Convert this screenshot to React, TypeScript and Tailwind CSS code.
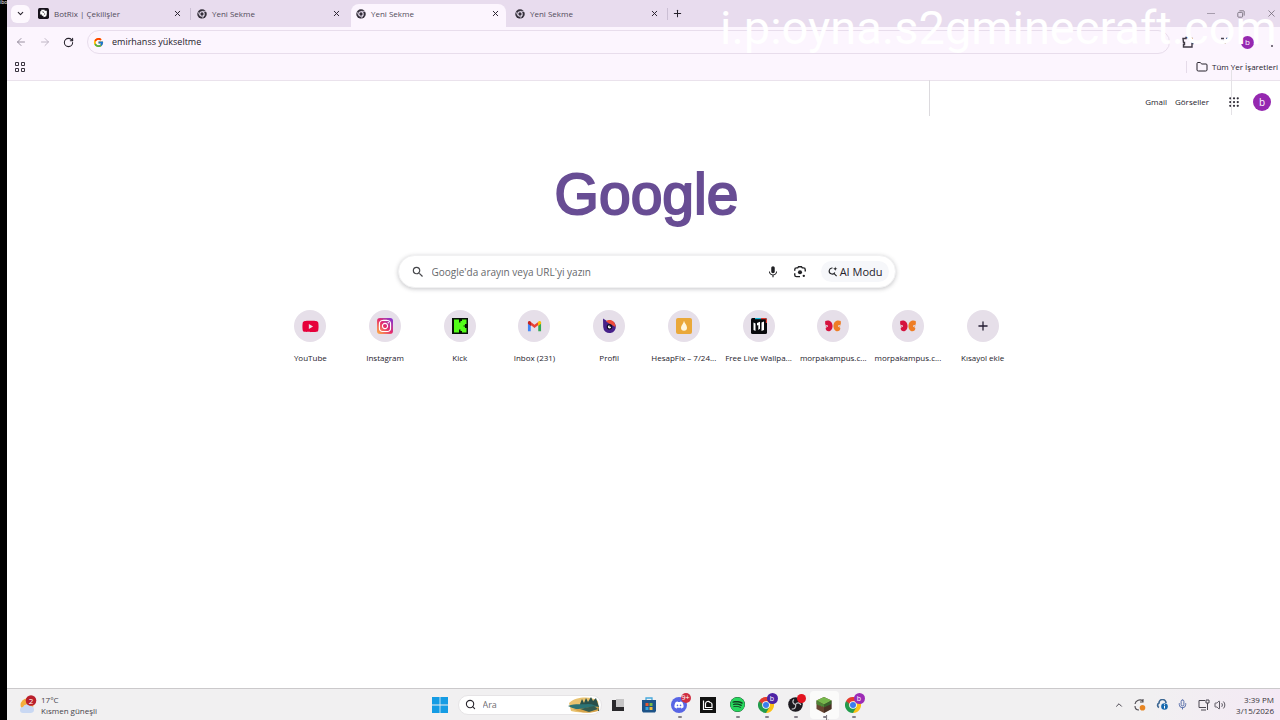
import React from "react";
import { ArrowLeft, ArrowRight, ChevronDown, ChevronUp, Folder, Mic, Plus, RotateCw, Search, Volume2, X } from "lucide-react";
import { FcGoogle } from "react-icons/fc";
import { FaDiscord, FaInstagram, FaSpotify, FaYoutube } from "react-icons/fa";
import { MdMic, MdSearch } from "react-icons/md";

function MonoChrome() {
  return (
    <svg viewBox="0 0 20 20" className="size-[10px] shrink-0" aria-hidden="true">
      <circle cx="10" cy="10" r="9.5" fill="#35303b" />
      <circle cx="10" cy="10" r="5.4" fill="#e9dff0" />
      <circle cx="10" cy="10" r="3.3" fill="#35303b" />
      <path d="M10 4.8H19M5.5 12.5 1.5 5.5M14.5 12.5 10 19.5" stroke="#e9dff0" strokeWidth="1.4" />
    </svg>
  );
}

function BotRix() {
  return (
    <svg viewBox="0 0 20 20" className="size-[11px] shrink-0" aria-hidden="true">
      <rect width="20" height="20" rx="3" fill="#16121b" />
      <path d="M6 3h6v2h4v6l-1 4-5 2v-3H7v-2H4V6h2z" fill="#fff" />
      <path d="m8 7 3 1M12 10v2" stroke="#16121b" strokeWidth="1.5" fill="none" />
    </svg>
  );
}

function ColorChrome() {
  return (
    <svg viewBox="0 0 48 48" className="size-4" aria-hidden="true">
      <path d="M24 24 3.2 12A24 24 0 0 1 44.8 12z" fill="#e33b2e" />
      <path d="M24 24 44.8 12A24 24 0 0 1 24 48z" fill="#fbc116" />
      <path d="M24 24V48A24 24 0 0 1 3.2 12z" fill="#229c4c" />
      <path d="M24 12h20.8L34.4 30z" fill="#fbc116" />
      <path d="M34.4 30 24 48 13.6 30z" fill="#229c4c" />
      <path d="M13.6 30 3.2 12 24 12z" fill="#e33b2e" />
      <path d="M3.2 12 13.6 30 24 30z" fill="#229c4c" />
      <circle cx="24" cy="24" r="11.5" fill="#fff" />
      <circle cx="24" cy="24" r="9" fill="#3b7ded" />
    </svg>
  );
}

function Lens() {
  return (
    <svg viewBox="0 0 24 24" className="size-[14px]" fill="none" stroke="#202124" strokeWidth="2.4" aria-hidden="true">
      <path d="M3 10V8a3 3 0 0 1 3-3h2l1.5-2h5L16 5h2a3 3 0 0 1 3 3v3M3 14v3a3 3 0 0 0 3 3h6" />
      <circle cx="12" cy="12.5" r="3.5" fill="#202124" stroke="none" />
      <circle cx="18.5" cy="18.5" r="2" fill="#202124" stroke="none" />
    </svg>
  );
}

function AiSearch() {
  return (
    <svg viewBox="0 0 24 24" className="size-[11px] shrink-0" fill="none" stroke="#202124" strokeWidth="2.4" aria-hidden="true">
      <path d="M12 4.5a6.500 6.500 0 1 0 5 9.500M14.500 15.500 21 22" />
      <path d="M18 1c.6 3.500 1.500 4.400 5 5-3.500.6-4.400 1.500-5 5-.6-3.500-1.500-4.400-5-5 3.500-.6 4.400-1.500 5-5z" fill="#202124" stroke="none" />
    </svg>
  );
}

function Extensions() {
  return (
    <svg viewBox="0 0 12 12" className="size-3" fill="none" stroke="#3f3944" strokeWidth="1.4" aria-hidden="true">
      <path d="M1 2.500h3V1.500h3v1h3v3h1v2h-1V11H1.500V8.500h1v-2h-1z" />
    </svg>
  );
}

function AppGrid() {
  const cells = [3, 8, 13];
  return (
    <svg viewBox="0 0 16 16" className="size-3" fill="#33303a" aria-hidden="true">
      {cells.flatMap((x) => cells.map((y) => <circle key={x + "-" + y} cx={x} cy={y} r="1.5" />))}
    </svg>
  );
}

function Kick() {
  return (
    <svg viewBox="0 0 16 16" className="size-4" aria-hidden="true">
      <rect width="16" height="16" fill="#071006" />
      <path d="M2 1.500h5v3h1.500V3H10V1.500h4.500V6H13v1.500h-1.500v1H13V10h1.500v4.500H10V13H8.500v-1.500H7v3H2z" fill="#53fc18" />
    </svg>
  );
}

function Mail() {
  return (
    <svg viewBox="0 0 16 12" className="h-3 w-[15px]" aria-hidden="true">
      <path d="M1 2v9.500h3V5z" fill="#4285f4" />
      <path d="M15 2v9.500h-3V5z" fill="#34a853" />
      <path d="M4 5 8 8l4-3V1.600L8 4.600 4 1.600z" fill="#ea4335" />
      <path d="M1 2.400C1 .6 3-.1 4.300 1.800V6L1 3.500z" fill="#c5221f" />
      <path d="M15 2.400c0-1.800-2-2.500-3.300-.6V6L15 3.500z" fill="#fbbc04" />
    </svg>
  );
}

function Profil() {
  return (
    <svg viewBox="0 0 16 16" className="size-4" aria-hidden="true">
      <path d="M2 .5 6 3a6.300 6.300 0 1 1-3.800 6z" fill="#47218a" />
      <path d="M5 3.500c3-3 9.500-1.500 9.500 5.500L9 6z" fill="#ee4b3a" />
      <circle cx="8.500" cy="8.800" r="2.800" fill="#120d26" />
      <path d="M8.500 7.200a1.600 1.600 0 1 0 1.600 1.600H8.500z" fill="#fff" />
    </svg>
  );
}

function Hesap() {
  return (
    <svg viewBox="0 0 16 16" className="size-4" aria-hidden="true">
      <rect width="16" height="16" rx="2" fill="#eaa83a" />
      <path d="M8 2.800c.4 2.500 3 4 3 6.900a3 3 0 0 1-6 0C5 7.500 7.600 6 8 2.800z" fill="#fff7df" />
    </svg>
  );
}

function Wallpaper() {
  return (
    <svg viewBox="0 0 16 16" className="size-4" aria-hidden="true">
      <rect width="16" height="16" rx="1.500" fill="#08090c" />
      <path d="M4 0h6v1.200H4z" fill="#19b7d4" />
      <path d="M10 0h4.500L16 1.500V5h-1.200V1.200H10z" fill="#e2382f" />
      <path d="m2.500 4.500 2 1V13l-2-1zM6 5l3-1.200v7L7.300 12V7L6 7.500zM10.500 4.500l2.500-1v8.500l-2.500 1z" fill="#fff" />
    </svg>
  );
}

function Butterfly() {
  return (
    <svg viewBox="0 0 16 12" className="h-3 w-4" aria-hidden="true">
      <path d="M.3 1C3-.3 7.300.5 7.600 6 7.300 11.500 3.500 12 1.500 10.500.5 9.500.4 8 1.300 7 0 5.500 0 3 .3 1z" fill="#d5123e" />
      <path d="M15.700 1C13-.3 8.700.5 8.400 6c.3 5.500 4.100 6 6.100 4.500 1-1 1.100-2.500.2-3.500C16 5.500 16 3 15.700 1z" fill="#ee7d25" />
      <path d="m0 5 3 1-2 1.200M16 5l-3 1 2 1.200" stroke="#e6dfe9" strokeWidth=".8" fill="none" />
    </svg>
  );
}

function Insta() {
  return (
    <span className="flex size-4 items-center justify-center rounded-[3px] bg-linear-to-tr from-[#fdb034] via-[#e4256c] to-[#7d22dc] text-white">
      <FaInstagram className="size-[14px]" />
    </span>
  );
}

function Obs() {
  return (
    <svg viewBox="0 0 16 16" className="size-[15px]" aria-hidden="true">
      <circle cx="8" cy="8" r="7.800" fill="#1d1a20" />
      <path d="M8 8C5 7.500 4.300 4.500 6.300 2.500M8 8c1.500-2.500 4.800-2.300 5.700.5M8 8c1 2.800-1 5.300-4 4.700" fill="none" stroke="#c9c6cb" strokeWidth="1.300" />
    </svg>
  );
}

type TabProps = { title: string; active?: boolean; icon: React.ReactNode; line?: boolean };

function Tab({ title, active, icon, line }: TabProps) {
  return (
    <div className="flex h-[23px] w-[159px] shrink-0 items-center">
      <div className={"flex h-full w-[155px] items-center gap-[5px] px-[5px] pb-1 " + (active ? "rounded-t-lg bg-[#fcf5fe]" : "")}>
        {icon}
        <button type="button" role="tab" aria-selected={!!active} className="flex-1 text-left text-[8px] leading-3 text-[#514a5a]">{title}</button>
        <button type="button" aria-label={"Kapat: " + title} className="flex size-3 items-center justify-center text-[#28222e]"><X className="size-[9px]" strokeWidth={2.6} /></button>
      </div>
      {line && <span className="mb-1 ml-[2px] h-3 w-px bg-[#cbbfd4]" />}
    </div>
  );
}

const shortcuts = [
  { name: "YouTube", icon: <FaYoutube className="size-[17px] text-[#e6003a]" /> },
  { name: "Instagram", icon: <Insta /> },
  { name: "Kick", icon: <Kick /> },
  { name: "Inbox (231)", icon: <Mail /> },
  { name: "Profil", icon: <Profil /> },
  { name: "HesapFix – 7/24...", icon: <Hesap /> },
  { name: "Free Live Wallpa...", icon: <Wallpaper /> },
  { name: "morpakampus.c...", icon: <Butterfly /> },
  { name: "morpakampus.c...", icon: <Butterfly /> },
  { name: "Kısayol ekle", icon: <Plus className="size-[14px] text-[#241d33]" strokeWidth={2.2} /> },
];

type TaskProps = { label: string; children: React.ReactNode; badge?: React.ReactNode; running?: boolean; lit?: boolean; wide?: boolean };

function Task({ label, children, badge, running, lit, wide }: TaskProps) {
  return (
    <button type="button" aria-label={label} className={"relative flex h-7 items-center justify-center rounded-sm " + (wide ? "w-[31px] " : "w-[29px] ") + (lit ? "bg-[#fbfbfa]" : "")}>
      {children}
      {badge}
      {running && <span className="absolute bottom-[1px] left-[13px] h-[2px] w-1 rounded-full bg-[#85818a]" />}
    </button>
  );
}

function PurpleBadge({ color }: { color: "blue" | "purple" }) {
  return (
    <span className={"absolute top-[2px] right-[3px] flex size-[11px] items-center justify-center rounded-full text-[7px] leading-none text-white " + (color === "blue" ? "bg-[#4c23a5]" : "bg-[#9c2bb6]")}>b</span>
  );
}

export default function App() {
  return (
    <div className="relative flex min-h-screen overflow-hidden bg-white font-['Open_Sans','Noto_Sans',sans-serif] text-[#25212b]">
      <aside className="w-[7px] shrink-0 overflow-hidden bg-black text-[5px] leading-[5px] text-white">ibo</aside>
      <div className="flex min-w-0 flex-1 flex-col">
        <header className="bg-[#fcf5fe]">
          <div className="flex h-[27px] items-center bg-[#e8dcee] pt-1 pl-1" role="tablist">
            <button type="button" aria-label="Sekmelerde ara" className="mr-[3px] mb-1 flex h-[18px] w-[19px] items-center justify-center rounded-md bg-[#fdf8fe]">
              <ChevronDown className="size-[9px]" strokeWidth={2.8} />
            </button>
            <Tab title="BotRix | Çekilişler" icon={<BotRix />} line />
            <Tab title="Yeni Sekme" icon={<MonoChrome />} />
            <Tab title="Yeni Sekme" icon={<MonoChrome />} active />
            <Tab title="Yeni Sekme" icon={<MonoChrome />} line />
            <button type="button" aria-label="Yeni sekme" className="mb-1 flex size-4 items-center justify-center"><Plus className="size-[11px]" strokeWidth={2.2} /></button>
            <div className="mb-1 ml-auto flex items-center gap-[18px] pr-[3px] text-[#6a6370]">
              <button type="button" aria-label="Küçült" className="flex size-3 items-center justify-center"><span className="h-px w-2 bg-[#a79dad]" /></button>
              <button type="button" aria-label="Önceki boyut" className="flex size-3 items-center justify-center">
                <svg viewBox="0 0 10 10" className="size-2" fill="none" stroke="#6a6370" aria-hidden="true"><rect x="1" y="3" width="6" height="6" rx="1" /><path d="M3 1h5a1 1 0 0 1 1 1v5" /></svg>
              </button>
              <button type="button" aria-label="Kapat" className="flex size-3 items-center justify-center"><X className="size-[11px]" strokeWidth={1.6} /></button>
            </div>
          </div>
          <div className="flex h-[30px] items-center pr-[2px] pl-2">
            <div className="flex w-[72px] items-center gap-3">
              <button type="button" aria-label="Geri" className="text-[#8f8696]"><ArrowLeft className="size-3" strokeWidth={1.8} /></button>
              <button type="button" aria-label="İleri" className="text-[#b9b0bf]"><ArrowRight className="size-3" strokeWidth={1.8} /></button>
              <button type="button" aria-label="Yenile"><RotateCw className="size-[11px]" strokeWidth={2.3} /></button>
            </div>
            <label className="flex h-6 flex-1 items-center gap-2 rounded-full border border-[#e8ddec] pl-[5px]">
              <FcGoogle className="size-[11px] shrink-0" />
              <input aria-label="Adres çubuğu" defaultValue="emirhanss yükseltme" className="min-w-0 flex-1 bg-transparent text-[9px] leading-3 outline-none" />
            </label>
            <div className="flex items-center pl-3">
              <button type="button" aria-label="Uzantılar"><Extensions /></button>
              <button type="button" aria-label="İndirilenler" className="ml-[25px]">
                <svg viewBox="0 0 12 12" className="size-3" stroke="#4a4450" strokeWidth="1.3" fill="none" aria-hidden="true"><path d="M2 2.500h3M7 2.500h3M4 5l2 2 2-2" /></svg>
              </button>
              <button type="button" aria-label="Profil" className="ml-[10px] flex size-[13px] items-center justify-center rounded-full bg-[#9528b0] text-[8px] leading-none text-white">b</button>
              <button type="button" aria-label="Menü" className="ml-[11px] flex w-[13px] flex-col items-center gap-[2px]">
                <span className="size-[2px] bg-[#7b7580]" /><span className="size-[2px] bg-[#7b7580]" /><span className="size-[2px] bg-[#7b7580]" />
              </button>
            </div>
          </div>
          <div className="flex h-6 items-center justify-between border-b border-[#eae2ec] pr-[2px] pb-1 pl-2">
            <button type="button" aria-label="Uygulamalar">
              <svg viewBox="0 0 10 10" className="size-[10px]" fill="none" stroke="#3a3540" aria-hidden="true"><path d="M.5.5h3v3h-3zM6.500.5h3v3h-3zM.5 6.500h3v3h-3zM6.500 6.500h3v3h-3z" /></svg>
            </button>
            <button type="button" className="flex items-center gap-1 border-l border-[#e5dbe9] pl-[9px] text-[8px] leading-3 whitespace-nowrap"><Folder className="size-3" />Tüm Yer İşaretleri</button>
          </div>
        </header>

        <main className="flex flex-1 flex-col items-center pl-[6px]">
          <nav className="flex h-[42px] w-full items-center justify-end pr-[9px] text-[8px]">
            <a href="#gmail">Gmail</a>
            <a href="#gorseller" className="ml-2">Görseller</a>
            <button type="button" aria-label="Google uygulamaları" className="ml-[19px]"><AppGrid /></button>
            <button type="button" aria-label="Google hesabı" className="ml-[13px] flex size-[18px] items-center justify-center rounded-full bg-[#9528b0] text-[10px] leading-none text-white">b</button>
          </nav>
          <h1 className="mt-8 mb-[22px] font-['Liberation_Sans'] text-[57px] leading-[78px] text-[#684d94] [-webkit-text-stroke:2px_#684d94]">Google</h1>
          <form className="flex h-[33px] w-[498px] max-w-full items-center rounded-full border border-[#f1f1f2] bg-white pr-[6px] pl-3 shadow-[0_1px_4px_rgba(50,50,60,0.28)]" onSubmit={(e) => e.preventDefault()}>
            <MdSearch className="size-[14px] shrink-0 text-[#45464a]" />
            <input aria-label="Google'da arayın" placeholder="Google'da arayın veya URL'yi yazın" className="ml-[7px] min-w-0 flex-1 text-[10px] leading-4 outline-none placeholder:text-[#66686c]" />
            <button type="button" aria-label="Sesli arama" className="mr-[13px]"><MdMic className="size-[14px] text-[#202124]" /></button>
            <button type="button" aria-label="Görsel arama" className="mr-[14px]"><Lens /></button>
            <button type="button" className="flex h-[21px] items-center gap-[2px] rounded-full bg-[#f6f7fa] px-[6px] text-[11px] leading-4 whitespace-nowrap"><AiSearch />AI Modu</button>
          </form>
          <div className="mt-[22px] grid w-[747px] max-w-full grid-cols-10">
            {shortcuts.map((s, i) => (
              <a key={i} href="#kisayol" className="flex flex-col items-center gap-[10px] text-[8px] leading-3 whitespace-nowrap">
                <span className="flex size-8 items-center justify-center rounded-full bg-[#e6dfe9]">{s.icon}</span>
                {s.name}
              </a>
            ))}
          </div>
        </main>

        <footer className="grid h-8 grid-cols-[1fr_auto_1fr] items-center border-t border-[#cbc9cb] bg-linear-to-r from-[#f1f0f1] from-90% to-[#f4e9f5]">
          <button type="button" className="flex items-center gap-1 pl-3 text-left text-[8px] leading-[11px] text-[#46434a]">
            <svg viewBox="0 0 18 20" className="h-5 w-[18px]" aria-hidden="true">
              <circle cx="8" cy="10" r="6.500" fill="#f4ad3c" />
              <path d="M4 18a3 3 0 0 1 0-6 4 4 0 0 1 7-1 3.500 3.500 0 0 1 1 7z" fill="#c9d8f3" />
              <circle cx="12" cy="5.500" r="5.300" fill="#ba1f2c" />
              <text x="12" y="8.500" textAnchor="middle" fontSize="8" fill="#fff">2</text>
            </svg>
            <span>17°C<br />Kısmen güneşli</span>
          </button>
          <div className="flex items-center pl-[6px]">
            <Task label="Başlat">
              <svg viewBox="0 0 16 16" className="size-4" fill="#159ce4" aria-hidden="true"><path d="M0 0h7.600v7.600H0zM8.400 0H16v7.600H8.400zM0 8.400h7.600V16H0zM8.400 8.400H16V16H8.400z" /></svg>
            </Task>
            <label className="mr-px ml-[3px] flex h-5 w-[144px] items-center gap-[7px] rounded-full border border-[#e6e4e6] bg-white pr-px pl-[6px]">
              <Search className="size-[11px] shrink-0 text-[#29262d]" strokeWidth={2.4} />
              <input placeholder="Ara" aria-label="Ara" className="min-w-0 flex-1 text-[9px] leading-3 outline-none placeholder:text-[#706e73]" />
              <svg viewBox="0 0 32 16" className="h-4 w-8 shrink-0" aria-hidden="true">
                <path d="M1 6C8-1 24-1 30 4l1 9c-8 3-22 3-28 1z" fill="#e9c370" />
                <path d="M12 7 14 2l2 4 2-5 2 4 3-5 2 4 3-3 3 9v4H12z" fill="#29504a" />
                <path d="M0 9c8-3 14-1 20-2 5 0 8 2 11 3-8 3-20 5-31-1z" fill="#2c7374" />
                <path d="M5 12c8 1 17-3 26-2l-1 4c-9 3-18 2-25-2z" fill="#d7a44b" />
                <path d="m12 12 14-3 4 3-9 3z" fill="#345c50" />
              </svg>
            </label>
            <Task label="Görev görünümü" wide><svg viewBox="0 0 12 12" className="size-3" aria-hidden="true"><path d="M4 0h8v8H4z" fill="#c5c4c5" /><path d="M0 1h4v7h8v4H0z" fill="#29282b" /></svg></Task>
            <Task label="Microsoft Store" wide>
              <svg viewBox="0 0 16 16" className="size-4" aria-hidden="true"><path d="M5 4V1h6v3" fill="none" stroke="#46a8dc" strokeWidth="1.3" /><path d="M1 3h14v11l-1 1.500H2L1 14z" fill="#1d5388" /><path d="M4.500 6h3v3h-3z" fill="#e45932" /><path d="M8.500 6h3v3h-3z" fill="#79b947" /><path d="M4.500 10h3v3h-3z" fill="#33a6df" /><path d="M8.500 10h3v3h-3z" fill="#f2bb3a" /></svg>
            </Task>
            <Task label="Discord" running badge={<span className="absolute top-[2px] right-[3px] flex h-[10px] w-[10px] items-center justify-center rounded-full bg-[#cf2e42] text-[7px] leading-none text-white">9+</span>}>
              <span className="flex size-4 items-center justify-center rounded-full bg-[#5865e5]"><FaDiscord className="size-[10px] text-white" /></span>
            </Task>
            <Task label="Epik">
              <svg viewBox="0 0 16 16" className="size-4" aria-hidden="true"><path d="M0 0h16v16H0z" fill="#111" /><path d="M3.500 3.500v9h9M5.500 10.500h6.500V7.500a2 2 0 0 0-2-2 2.500 2.500 0 0 0-4.500 1z" fill="none" stroke="#fff" strokeWidth="1.200" /></svg>
            </Task>
            <Task label="Spotify" running><FaSpotify className="size-[15px] rounded-full bg-[#123d20] text-[#27d65e]" /></Task>
            <Task label="Chrome" running badge={<PurpleBadge color="blue" />}><ColorChrome /></Task>
            <Task label="OBS Studio" running badge={<span className="absolute top-[3px] right-[4px] size-[9px] rounded-full bg-[#e31420]" />}><Obs /></Task>
            <Task label="Minecraft" running lit>
              <svg viewBox="0 0 16 16" className="size-4" aria-hidden="true"><path d="m8 0 7.500 3.500v8.500L8 16 .5 12V3.500z" fill="#684531" /><path d="m8 0 7.500 3.500L8 7.500.5 3.500z" fill="#76b84c" /><path d="M.5 3.500 8 7.500v3l-2-1.500v1L3.500 8v1l-3-2z" fill="#4f8637" /><path d="m15.500 3.500-7.500 4v3l2-1.500v1L12.500 8v1l3-2z" fill="#37652c" /><path d="m8 10.500 7.500-3.500v5L8 16z" fill="#3c291f" opacity=".7" /></svg>
              <svg viewBox="0 0 8 10" className="absolute -bottom-1 left-3 h-2 w-[14px]" aria-hidden="true"><path d="M1 0v8l2-2 2 3" fill="#fff" stroke="#3a373c" strokeWidth=".9" /></svg>
            </Task>
            <Task label="Chrome penceresi" running badge={<PurpleBadge color="purple" />}><ColorChrome /></Task>
          </div>
          <div className="flex items-center justify-end pr-[6px] text-[#4a4650]">
            <button type="button" aria-label="Gizli simgeler"><ChevronUp className="size-[10px]" strokeWidth={2.4} /></button>
            <svg viewBox="0 0 12 12" className="ml-[10px] size-3" aria-hidden="true"><path d="M1 5a5 5 0 0 1 8-3M9 0v3H6M1 7c0 2 1 4 4 4" fill="none" stroke="#4d4a50" strokeWidth="1.1" /><circle cx="8.500" cy="8.800" r="2.800" fill="#e88623" /></svg>
            <svg viewBox="0 0 12 12" className="ml-[10px] size-3" aria-hidden="true"><path d="M3 8.500A2.500 2.500 0 0 1 3 4a3.500 3.500 0 0 1 7 0" fill="none" stroke="#3c6792" strokeWidth="1.700" /><circle cx="8.500" cy="7.500" r="3.300" fill="#1769ae" /><path d="M8.500 5.300v1M8.500 7v2.500" stroke="#fff" /></svg>
            <Mic className="ml-[9px] size-[11px] text-[#4d65a4]" />
            <svg viewBox="0 0 12 12" className="ml-[10px] size-3" fill="none" stroke="#4a4650" aria-hidden="true"><path d="M7 1.500H1v7h7M3 11h5M9.500 4v7M8 1h3v3H8z" /></svg>
            <Volume2 className="ml-1 size-3" strokeWidth={1.8} />
            <time className="ml-[10px] text-right text-[8px] leading-[11px] text-[#36333a]">3:39 PM<br />3/15/2026</time>
          </div>
        </footer>
      </div>
      <span className="pointer-events-none absolute top-20 left-[929px] h-9 w-px bg-[#dcdade]" aria-hidden="true" />
      <span className="pointer-events-none absolute top-[70px] left-[1231px] h-[45px] w-px bg-[#e4e2e6]" aria-hidden="true" />
      <p className="pointer-events-none absolute top-0 left-[720px] font-[Roboto] text-[47px] leading-[55px] whitespace-nowrap text-white">i.p:oyna.s2gminecraft.com</p>
    </div>
  );
}
